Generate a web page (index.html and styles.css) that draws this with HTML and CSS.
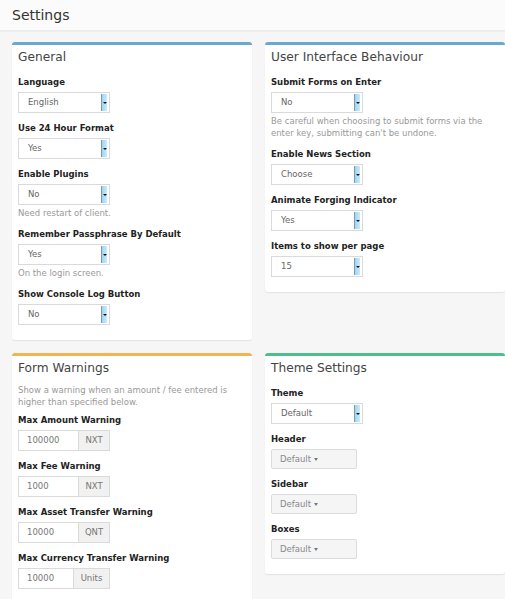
FILE: index.html
```html
<!DOCTYPE html>
<html>
<head>
<meta charset="utf-8">
<title>Settings</title>
<link rel="stylesheet" href="styles.css">
</head>
<body>
<header class="page-header">Settings</header>
<main class="content">
  <section class="box box-blue">
    <h2 class="box-title">General</h2>
    <div class="field">
      <div class="label">Language</div>
      <div class="select"><span class="select-value">English</span><span class="select-arrow"></span></div>
    </div>
    <div class="field">
      <div class="label">Use 24 Hour Format</div>
      <div class="select"><span class="select-value">Yes</span><span class="select-arrow"></span></div>
    </div>
    <div class="field">
      <div class="label">Enable Plugins</div>
      <div class="select"><span class="select-value">No</span><span class="select-arrow"></span></div>
      <div class="help">Need restart of client.</div>
    </div>
    <div class="field">
      <div class="label">Remember Passphrase By Default</div>
      <div class="select"><span class="select-value">Yes</span><span class="select-arrow"></span></div>
      <div class="help">On the login screen.</div>
    </div>
    <div class="field">
      <div class="label">Show Console Log Button</div>
      <div class="select"><span class="select-value">No</span><span class="select-arrow"></span></div>
    </div>
  </section>

  <section class="box box-blue">
    <h2 class="box-title">User Interface Behaviour</h2>
    <div class="field">
      <div class="label">Submit Forms on Enter</div>
      <div class="select"><span class="select-value">No</span><span class="select-arrow"></span></div>
      <div class="help">Be careful when choosing to submit forms via the enter key, submitting can't be undone.</div>
    </div>
    <div class="field">
      <div class="label">Enable News Section</div>
      <div class="select"><span class="select-value">Choose</span><span class="select-arrow"></span></div>
    </div>
    <div class="field">
      <div class="label">Animate Forging Indicator</div>
      <div class="select"><span class="select-value">Yes</span><span class="select-arrow"></span></div>
    </div>
    <div class="field">
      <div class="label">Items to show per page</div>
      <div class="select"><span class="select-value">15</span><span class="select-arrow"></span></div>
    </div>
  </section>

  <section class="box box-orange">
    <h2 class="box-title">Form Warnings</h2>
    <p class="intro">Show a warning when an amount / fee entered is higher than specified below.</p>
    <div class="field">
      <div class="label">Max Amount Warning</div>
      <div class="input-group"><span class="input">100000</span><span class="addon">NXT</span></div>
    </div>
    <div class="field">
      <div class="label">Max Fee Warning</div>
      <div class="input-group"><span class="input">1000</span><span class="addon">NXT</span></div>
    </div>
    <div class="field">
      <div class="label">Max Asset Transfer Warning</div>
      <div class="input-group"><span class="input">10000</span><span class="addon">QNT</span></div>
    </div>
    <div class="field">
      <div class="label">Max Currency Transfer Warning</div>
      <div class="input-group"><span class="input">10000</span><span class="addon addon-wide">Units</span></div>
    </div>
  </section>

  <section class="box box-green">
    <h2 class="box-title">Theme Settings</h2>
    <div class="field">
      <div class="label">Theme</div>
      <div class="select"><span class="select-value">Default</span><span class="select-arrow"></span></div>
    </div>
    <div class="field">
      <div class="label">Header</div>
      <div class="dropdown">Default<span class="caret"></span></div>
    </div>
    <div class="field">
      <div class="label">Sidebar</div>
      <div class="dropdown">Default<span class="caret"></span></div>
    </div>
    <div class="field">
      <div class="label">Boxes</div>
      <div class="dropdown">Default<span class="caret"></span></div>
    </div>
  </section>
</main>
</body>
</html>
```

FILE: styles.css
```css
html, body {
  margin: 0;
  padding: 0;
  overflow: hidden;
}

body {
  background: #f6f6f6;
  font-family: "DejaVu Sans", Verdana, sans-serif;
  color: #222;
}

.page-header {
  height: 30px;
  line-height: 30px;
  padding-left: 12px;
  font-size: 14px;
  color: #333;
  background: #fbfbfb;
  border-bottom: 1px solid #ececec;
  box-shadow: 0 1px 1px rgba(0, 0, 0, 0.03);
}

.content {
  display: grid;
  grid-template-columns: 240px 240px;
  column-gap: 13px;
  row-gap: 13px;
  align-items: start;
  padding: 11px 0 0 12px;
}

.box {
  background: #fff;
  border-top: 3px solid #6ba7cf;
  border-radius: 3px;
  box-shadow: 0 1px 1px rgba(0, 0, 0, 0.08);
  padding: 3px 6px 7px;
}

.box-blue { border-top-color: #6ba8d0; }
.box-orange { border-top-color: #f4b250; }
.box-green { border-top-color: #4dbf8b; }

.box-title {
  margin: 0 0 9px;
  font-size: 12.2px;
  line-height: 18px;
  font-weight: normal;
  color: #444;
}

.field {
  margin-bottom: 8px;
}

.label {
  font-size: 8.5px;
  font-weight: bold;
  line-height: 14px;
  margin-bottom: 3px;
  color: #222;
}

.help {
  font-size: 8.5px;
  line-height: 12px;
  color: #999;
  margin: 2px 0 2px;
}

.intro {
  font-size: 8.5px;
  line-height: 12px;
  color: #999;
  margin: -2px 0 5px;
}

.select {
  display: flex;
  box-sizing: border-box;
  width: 92px;
  height: 21px;
  border: 1px solid #dadada;
  background: #fff;
}

.select-value {
  flex: 1;
  padding-left: 9px;
  font-size: 8.5px;
  line-height: 19px;
  color: #666;
}

.select-arrow {
  display: flex;
  align-items: center;
  justify-content: center;
  width: 5px;
  margin: 1px 2px 1px 0;
  border-left: 1px solid #7f9aab;
  background: linear-gradient(to right, #9fd6f1, #c8ebfb);
}

.select-arrow::after {
  content: "";
  border-left: 2px solid transparent;
  border-right: 2px solid transparent;
  border-top: 2px solid #111;
}

.input-group {
  display: flex;
  box-sizing: border-box;
  width: 92px;
  height: 21px;
}

.input {
  flex: 1;
  box-sizing: border-box;
  border: 1px solid #dadada;
  border-right: none;
  padding-left: 8px;
  font-size: 8.5px;
  line-height: 19px;
  color: #777;
  background: #fff;
}

.addon {
  box-sizing: border-box;
  width: 32px;
  border: 1px solid #dadada;
  background: #f1f1f1;
  font-size: 8.5px;
  line-height: 19px;
  text-align: center;
  color: #777;
}

.addon-wide {
  width: 37px;
}

.dropdown {
  box-sizing: border-box;
  width: 86px;
  height: 20px;
  padding-left: 8px;
  border: 1px solid #dcdcdc;
  border-radius: 2px;
  background: #f5f5f5;
  font-size: 8.5px;
  line-height: 18px;
  color: #888;
}

.caret {
  display: inline-block;
  margin-left: 3px;
  vertical-align: middle;
  border-left: 2.5px solid transparent;
  border-right: 2.5px solid transparent;
  border-top: 3px solid #777;
}
```
